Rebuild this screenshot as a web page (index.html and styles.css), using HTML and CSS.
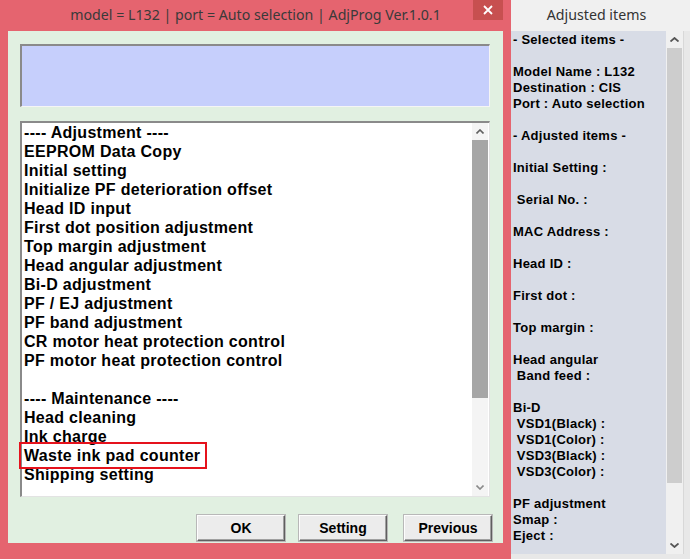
FILE: index.html
```html
<!DOCTYPE html>
<html lang="en">

<head>
    <link rel="stylesheet" href="styles.css">
    <meta charset="UTF-8">
    <meta name="viewport" content="width=device-width, initial-scale=1.0">
</head>

<body>
    <div class="window">
        <div class="titlebar">
            <span></span>
            <span class="title">model = L132 | port = Auto selection | AdjProg Ver.1.0.1</span>
            <span class="close">
                <svg width="10" height="10" viewBox="0 0 10 10">
                    <path d="M1 1 L9 9 M9 1 L1 9" stroke="#fff" stroke-width="1.8" fill="none" />
                </svg>
            </span>
        </div>
        <div class="client">
            <div class="message"></div>

            <div class="list">
                <div class="list-items">
                    <div class="item">---- Adjustment ----</div>
                    <div class="item">EEPROM Data Copy</div>
                    <div class="item">Initial setting</div>
                    <div class="item">Initialize PF deterioration offset</div>
                    <div class="item">Head ID input</div>
                    <div class="item">First dot position adjustment</div>
                    <div class="item">Top margin adjustment</div>
                    <div class="item">Head angular adjustment</div>
                    <div class="item">Bi-D adjustment</div>
                    <div class="item">PF / EJ adjustment</div>
                    <div class="item">PF band adjustment</div>
                    <div class="item">CR motor heat protection control</div>
                    <div class="item">PF motor heat protection control</div>
                    <div class="item"></div>
                    <div class="item">---- Maintenance ----</div>
                    <div class="item">Head cleaning</div>
                    <div class="item">Ink charge</div>
                    <div class="item">Waste ink pad counter</div>
                    <div class="item">Shipping setting</div>
                </div>
                <!-- red marker drawn over the list -->
                <div class="highlight"></div>
                <div class="vscroll">
                    <div class="arrow">
                        <svg width="8" height="5" viewBox="0 0 8 5"><path d="M0.5 4.5 L4 1 L7.5 4.5" stroke="#606060" stroke-width="1.6" fill="none" /></svg>
                    </div>
                    <div class="thumb dark"></div>
                    <div class="track"></div>
                    <div class="arrow">
                        <svg width="8" height="5" viewBox="0 0 8 5"><path d="M0.5 0.5 L4 4 L7.5 0.5" stroke="#8a8a8a" stroke-width="1.6" fill="none" /></svg>
                    </div>
                </div>
            </div>

            <div class="buttons">
                <button class="btn">OK</button>
                <button class="btn">Setting</button>
                <button class="btn">Previous</button>
            </div>
        </div>
    </div>

    <div class="side">
        <div class="side-header">Adjusted items</div>
        <div class="side-body">
            <div class="side-text">- Selected items -

Model Name : L132
Destination : CIS
Port : Auto selection

- Adjusted items -

Initial Setting :

 Serial No. :

MAC Address :

Head ID :

First dot :

Top margin :

Head angular
 Band feed :

Bi-D
 VSD1(Black) :
 VSD1(Color) :
 VSD3(Black) :
 VSD3(Color) :

PF adjustment
Smap :
Eject :</div>
            <div class="vscroll side-scroll">
                <div class="arrow">
                    <svg width="9" height="5" viewBox="0 0 9 5"><path d="M0.5 4.5 L4.5 1 L8.5 4.5" stroke="#555" stroke-width="1.8" fill="none" /></svg>
                </div>
                <div class="thumb light"></div>
                <div class="track"></div>
                <div class="arrow">
                    <svg width="9" height="5" viewBox="0 0 9 5"><path d="M0.5 0.5 L4.5 4 L8.5 0.5" stroke="#555" stroke-width="1.8" fill="none" /></svg>
                </div>
            </div>
        </div>
    </div>
</body>

</html>
```

FILE: styles.css
```css
body {
    margin: 0;
    display: flex;
    height: 559px;
    overflow: hidden;
    background: #e8e8e8;
}

.window {
    width: 511px;
    height: 559px;
    background: #e5646f;
    display: flex;
    flex-direction: column;
}

.titlebar {
    height: 31px;
    display: grid;
    grid-template-columns: 30px 1fr 30px;
    padding: 0 8px;
}

.title {
    font-family: "Noto Sans", sans-serif;
    font-size: 14.2px;
    color: #3a3a3a;
    text-align: center;
    line-height: 30px;
}

.close {
    height: 20px;
    background: #c75050;
    display: flex;
    align-items: center;
    justify-content: center;
}

.client {
    margin: 0 8px;
    height: 512px;
    background: #e1f0e1;
    padding: 13px 13px 0 12px;
    box-sizing: border-box;
    display: flex;
    flex-direction: column;
}

.message {
    height: 63px;
    background: #c6cffc;
    border-top: 2px solid #8a8a8a;
    border-left: 2px solid #8a8a8a;
    border-right: 1px solid #f5f5f5;
    border-bottom: 1px solid #f5f5f5;
    box-sizing: border-box;
}

.list {
    position: relative;
    margin-top: 14px;
    height: 376px;
    background: #fff;
    border-top: 2px solid #8a8a8a;
    border-left: 2px solid #8a8a8a;
    border-right: 1px solid #e3e3e3;
    border-bottom: 1px solid #e3e3e3;
    box-sizing: border-box;
    display: flex;
}

.list-items {
    flex: 1;
    padding-left: 2px;
}

.item {
    height: 19px;
    line-height: 19px;
    font-family: "Liberation Sans", Arial, sans-serif;
    font-weight: bold;
    font-size: 16px;
    letter-spacing: 0.3px;
    color: #000;
    white-space: nowrap;
}

.highlight {
    position: absolute;
    left: -3px;
    top: 319px;
    width: 188px;
    height: 27px;
    border: 2px solid #e5121c;
    box-sizing: border-box;
}

.vscroll {
    width: 16px;
    margin-right: 1px;
    display: flex;
    flex-direction: column;
    background: #f4f4f4;
}

.arrow {
    height: 17px;
    display: flex;
    align-items: center;
    justify-content: center;
}

.thumb.dark {
    height: 258px;
    background: #a6a6a6;
}

.track {
    flex: 1;
}

.buttons {
    display: flex;
    justify-content: flex-end;
    margin-top: 18px;
    margin-right: -2px;
}

.btn {
    width: 88px;
    height: 26px;
    background: #ececec;
    border: 1px solid;
    border-color: #fdfdfd #5f5f5f #5f5f5f #fdfdfd;
    box-shadow: inset -1px -1px 0 #a0a0a0, 0 0 0 1px #b8b8b8;
    font-family: "Liberation Sans", Arial, sans-serif;
    font-weight: bold;
    font-size: 14px;
    color: #000;
    padding: 0;
}

.btn + .btn {
    margin-left: 14px;
}

.btn:last-child {
    margin-left: 17px;
}

.side {
    flex: 1;
    display: flex;
    flex-direction: column;
    background: #e8e8e8;
}

.side-header {
    height: 31px;
    background: #f0f0f0;
    font-family: "Noto Sans", sans-serif;
    font-size: 14.2px;
    color: #333;
    text-align: center;
    line-height: 30px;
    padding-right: 8px;
}

.side-body {
    height: 523px;
    display: flex;
    margin-right: 6px;
    border-right: 1px solid #d8d8d8;
}

.side-text {
    flex: 1;
    background: #d8dce6;
    padding: 1px 0 0 2px;
    font-family: "Liberation Sans", Arial, sans-serif;
    font-weight: bold;
    font-size: 13px;
    letter-spacing: 0.25px;
    line-height: 16px;
    color: #000;
    white-space: pre;
    overflow: hidden;
}

.side-scroll {
    width: 17px;
    margin-right: 0;
    background: #f0f0f0;
}

.thumb.light {
    height: 435px;
    margin: 0 1px;
    background: #cdcdcd;
}
```
